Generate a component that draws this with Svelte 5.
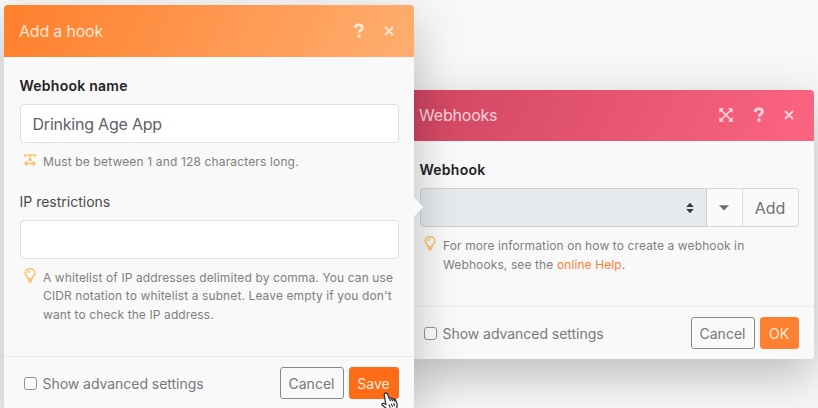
<script>
  let name = $state('Drinking Age App');
  let ip = $state('');
</script>

{#snippet help()}
  <svg width="12" height="16" viewBox="0 0 12 16"><path d="M1.9 5C2.2 2.9 3.6 1.9 5.8 1.9c2.1 0 3.6 1 3.6 2.8 0 2.4-3.3 2.3-3.3 5" fill="none" stroke="currentColor" stroke-width="2.8" /><circle cx="6" cy="13.1" r="1.8" fill="currentColor" /></svg>
{/snippet}

{#snippet close()}
  <svg width="10" height="10" viewBox="0 0 10 10"><path d="M1 1l8 8M9 1L1 9" stroke="currentColor" stroke-width="1.9" /></svg>
{/snippet}

{#snippet bulb()}
  <svg class="bulb" width="12" height="15" viewBox="0 0 12 15.5" preserveAspectRatio="none" fill="none" stroke="#fcc161" stroke-width="1.5"><path d="M4 11.2C4 8.7 1.2 8.3 1.2 5.3a4.8 4.5 0 0 1 9.6 0c0 3-2.8 3.4-2.8 5.9zM3.8 5.2c.2-1.2.9-1.8 2.1-1.9" /><path d="M4 12.7h4M4.6 14.5h2.8" stroke-width="1.5" /></svg>
{/snippet}

<main>
  <section class="dialog webhooks">
    <header>
      <h2>Webhooks</h2>
      <span class="expand">
        <svg width="14" height="14" viewBox="0 0 14 14"><path d="M2 2l10 10M12 2L2 12" stroke="currentColor" stroke-width="1.7" /><path d="M0.3 0.3h4.7L0.3 5zM13.7 0.3v4.7L9 0.3zM0.3 13.7V9L5 13.7zM13.7 13.7H9L13.7 9z" fill="currentColor" /></svg>
      </span>
      <span class="help">{@render help()}</span>
      <span class="close">{@render close()}</span>
    </header>
    <div class="body">
      <div class="label strong">Webhook</div>
      <div class="group">
        <div class="select">
          <svg width="8" height="12" viewBox="0 0 8 12"><path d="M4 .7L7.8 5H.2zM4 11.3L.2 7h7.6z" fill="#343a40" /></svg>
        </div>
        <button class="caret" aria-label="Options"><svg width="10" height="6" viewBox="0 0 10 6"><path d="M0 .3h10L5 5.5z" fill="#6a6d70" /></svg></button>
        <button class="add">Add</button>
      </div>
      <div class="hint">
        {@render bulb()}
        <p>For more information on how to create a webhook in<br />Webhooks, see the <a href="#help">online Help</a>.</p>
      </div>
    </div>
    <footer>
      <label><input type="checkbox" /><span>Show advanced settings</span></label>
      <button class="cancel">Cancel</button>
      <button class="primary ok">OK</button>
    </footer>
  </section>

  <section class="dialog hook">
    <header>
      <h2>Add a hook</h2>
      <span class="help">{@render help()}</span>
      <span class="close">{@render close()}</span>
    </header>
    <div class="body">
      <div class="label strong">Webhook name</div>
      <input class="field" bind:value={name} aria-label="Webhook name" />
      <div class="hint single">
        <svg class="range" width="12" height="12" viewBox="0 0 12 12" fill="none" stroke="#fcc161" stroke-width="1.4"><path d="M1 3.2V1h10v2.2M6 1v5M4 6h4M1.2 9.5h9.6M3.2 7.4L1 9.5l2.2 2.1M8.8 7.4L11 9.5l-2.2 2.1" /></svg>
        <p>Must be between 1 and 128 characters long.</p>
      </div>
      <div class="label ip">IP restrictions</div>
      <input class="field" bind:value={ip} aria-label="IP restrictions" />
      <div class="hint">
        {@render bulb()}
        <p>A whitelist of IP addresses delimited by comma. You can use<br />CIDR notation to whitelist a subnet. Leave empty if you don't<br />want to check the IP address.</p>
      </div>
    </div>
    <footer>
      <label><input type="checkbox" /><span>Show advanced settings</span></label>
      <button class="cancel">Cancel</button>
      <button class="primary save">Save</button>
    </footer>
    <i class="arrow"></i>
  </section>

  <svg class="cursor" width="17" height="20" viewBox="0 0 17 20"><path d="M4.2 1.2c1-.5 1.9 0 2.3.9l1.8 4.2c.7-.7 1.9-.5 2.3.4.8-.5 1.9-.2 2.2.7.9-.3 1.7.2 2 1.1l1.2 3.4c.5 1.8-.1 3.2-.5 4.7l.4 2.4H7.6l-.8-1.5-5.1-3.9c-1.5-1.2-.3-2.7 1.3-2.1l1.8.8L3.3 3.4c-.3-.9 0-1.8.9-2.2z" fill="#fff" stroke="#333" stroke-width="1.3" /><path d="M8.3 6.3l1.3 3M10.6 6.7l1.1 2.5M12.8 7.4l.9 2M8 12.5l1.2 3.3M10.4 11.7l1.2 3.3M12.6 11l1.2 3.3" fill="none" stroke="#333" stroke-width="1.1" /></svg>
</main>

<style>
  :global(body) { margin: 0; background: #f8f8f8; }
  * { box-sizing: border-box; }
  main {
    position: relative; width: 818px; height: 408px; overflow: hidden;
    background: #f8f8f8; font-family: Inter, "Liberation Sans", sans-serif; color: #77797c;
  }
  .dialog {
    position: absolute; width: 410px; display: flex; flex-direction: column;
    background: #f9f9f9; border-radius: 4px; box-shadow: 0 16px 48px rgba(0, 0, 0, .25);
  }
  .webhooks { left: 403.5px; top: 89.5px; height: 269.5px; }
  .hook { left: 3.5px; top: 5px; height: 404px; }
  header {
    height: 51.5px; flex: none; display: flex; align-items: center; padding: 0 20px 0 15.5px;
    border-radius: 4px 4px 0 0; color: #ffe6d2;
  }
  .hook header { background: linear-gradient(115deg, #ff7f2c, #ffae70); }
  .webhooks header { background: linear-gradient(115deg, #cf4560, #fc6581); color: #ffd3dc; }
  h2 { margin: 0; flex: 1; font-size: 16px; font-weight: 400; line-height: 24px; letter-spacing: -.2px; }
  header span { display: flex; }
  .help { margin-right: 19px; }
  .expand { margin-right: 20px; }
  .body { flex: 1; padding: 19px 16px 0; }
  .label { height: 20px; font-size: 14px; line-height: 20px; color: #4a4b4d; margin-bottom: 8px; }
  .strong { font-weight: 600; color: #222; letter-spacing: .25px; }
  .field {
    display: block; width: 379px; height: 39px; padding: 1px 12px 0; border: 1px solid #dfdfdf; border-radius: 4px;
    background: #fff; font: 16px Inter, "Liberation Sans", sans-serif; letter-spacing: -.22px; color: #5f6266; outline: none;
  }
  .hint { display: flex; padding: 10px 0 0 4px; }
  .hint p { margin: 0 0 0 7.5px; font-size: 12px; line-height: 18.5px; letter-spacing: .11px; color: #7f7f7f; white-space: nowrap; }
  .hint svg { flex: none; }
  .bulb { margin-top: -1px; }
  .range { margin-top: 1.5px; }
  .single { height: 49px; }
  .single p { letter-spacing: .15px; }
  a { color: #ff7f35; text-decoration: none; }
  .group { display: flex; height: 39px; width: 379px; }
  .select {
    flex: 1; display: flex; align-items: center; justify-content: flex-end; padding-right: 12px;
    background: #e6eaed; border: 1px solid #cdd1d5; border-radius: 4px 0 0 4px;
  }
  .group button { border: 1px solid #d5d7d9; border-left: 0; background: #fafafa; padding: 0; color: #6e7174; font: 16px Inter, sans-serif; }
  .group .caret { width: 36px; display: flex; align-items: center; justify-content: center; }
  .group .add { width: 56px; border-radius: 0 4px 4px 0; }
  footer { height: 53px; flex: none; display: flex; align-items: center; border-top: 1px solid #ececec; padding: 0 15px 0 20.5px; }
  footer label { display: flex; align-items: center; flex: 1; font-size: 14px; letter-spacing: -.04px; }
  footer input { appearance: none; margin: 0 5.5px 0 0; width: 13px; height: 13px; border: 1px solid #929292; border-radius: 3px; background: #fff; }
  footer button { height: 32px; border-radius: 3px; border: 1px solid #85898d; background: #fafafa; color: #73777b; font: 14px Inter, sans-serif; padding: 0; }
  .cancel { width: 64px; margin-right: 5px; }
  footer .primary { background: #ff8030; border-color: #ff8030; color: #ffecdd; }
  .ok { width: 39px; }
  footer .save { width: 50px; background: #ff6b17; border-color: #ff6b17; }
  .arrow {
    position: absolute; left: 410px; top: 192px; width: 10px; height: 20px; background: #f9f9f9;
    clip-path: polygon(0 0, 100% 50%, 0 100%);
  }
  .cursor { position: absolute; left: 380.5px; top: 391.5px; }
</style>
